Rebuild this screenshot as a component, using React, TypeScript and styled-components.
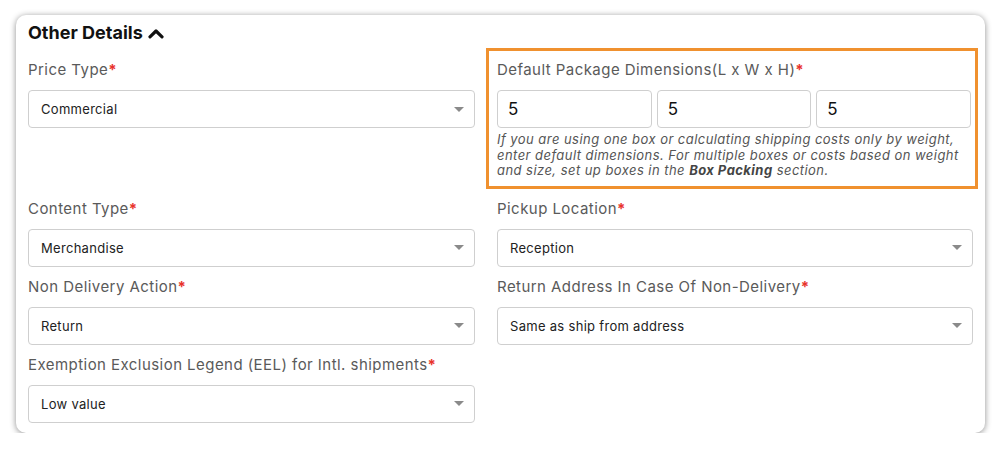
import { FC } from "react";
import styled, { createGlobalStyle } from "styled-components";

const GlobalStyle = createGlobalStyle`
    html, body {
        margin: 0;
        padding: 0;
        background: #ffffff;
    }

    body {
        font-family: Inter, "Noto Sans", sans-serif;
        color: #222222;
    }
`;

type SelectFieldProps = {
    label: string;
    value: string;
};

const SelectField: FC<SelectFieldProps> = ({ label, value }) => (
    <Field>
        <FieldLabel>
            {label}
            <Required>*</Required>
        </FieldLabel>
        <SelectBox>
            <SelectValue>{value}</SelectValue>
            <Caret />
        </SelectBox>
    </Field>
);

const App: FC = () => {
    return (
        <>
            <GlobalStyle />
            <Page>
                <Card>
                    <CardTitle>
                        Other Details
                        <svg width="16" height="11" viewBox="0 0 16 11" aria-hidden="true">
                            <polyline
                                points="2,8.8 8,3 14,8.8"
                                fill="none"
                                stroke="#111"
                                strokeWidth="3.2"
                                strokeLinecap="round"
                                strokeLinejoin="round"
                            />
                        </svg>
                    </CardTitle>
                    <FormGrid>
                        <SelectField label="Price Type" value="Commercial" />
                        <Highlight>
                            <FieldLabel>
                                Default Package Dimensions(L x W x H)
                                <Required>*</Required>
                            </FieldLabel>
                            <DimensionRow>
                                <DimensionInput defaultValue="5" />
                                <DimensionInput defaultValue="5" />
                                <DimensionInput defaultValue="5" />
                            </DimensionRow>
                            <HelpText>
                                If you are using one box or calculating shipping costs only by weight,
                                enter default dimensions. For multiple boxes or costs based on weight
                                and size, set up boxes in the <strong>Box Packing</strong> section.
                            </HelpText>
                        </Highlight>
                        <SelectField label="Content Type" value="Merchandise" />
                        <SelectField label="Pickup Location" value="Reception" />
                        <SelectField label="Non Delivery Action" value="Return" />
                        <SelectField
                            label="Return Address In Case Of Non-Delivery"
                            value="Same as ship from address"
                        />
                        <SelectField
                            label="Exemption Exclusion Legend (EEL) for Intl. shipments"
                            value="Low value"
                        />
                    </FormGrid>
                </Card>
            </Page>
        </>
    );
};

export default App;

const Page = styled.div`
    padding: 15px 15px 0 16px;
`;

const Card = styled.section`
    background: #ffffff;
    border-radius: 10px;
    box-shadow: 0 1px 6px rgba(0, 0, 0, 0.45);
    padding: 8px 12px 10px 12px;
`;

const CardTitle = styled.h2`
    display: flex;
    align-items: center;
    gap: 5px;
    margin: 0;
    font-size: 18px;
    font-weight: 700;
    line-height: 20px;
    color: #111111;
`;

const FormGrid = styled.div`
    display: grid;
    grid-template-columns: 447px 1fr;
    column-gap: 22px;
    row-gap: 10px;
    margin-top: 17px;
    align-items: start;
`;

const Field = styled.div`
    display: flex;
    flex-direction: column;
    gap: 10px;
`;

const FieldLabel = styled.label`
    font-size: 15px;
    line-height: 20px;
    color: #5a5a5a;
    letter-spacing: 0.45px;
`;

const Required = styled.span`
    color: #e8322b;
    font-weight: 700;
`;

const SelectBox = styled.div`
    display: flex;
    align-items: center;
    justify-content: space-between;
    height: 38px;
    box-sizing: border-box;
    padding: 0 10px 0 12px;
    border: 1px solid #cfcfcf;
    border-radius: 4px;
    background: #ffffff;
`;

const SelectValue = styled.span`
    font-size: 13px;
    color: #222222;
    letter-spacing: 0.3px;
`;

const Caret = styled.span`
    width: 0;
    height: 0;
    border-left: 5px solid transparent;
    border-right: 5px solid transparent;
    border-top: 5px solid #8a8a8a;
`;

const Highlight = styled.div`
    display: flex;
    flex-direction: column;
    margin: -12px -5px 0 -11px;
    padding: 9px 4px 7px 8px;
    border: 3px solid #f0912f;
`;

const DimensionRow = styled.div`
    display: grid;
    grid-template-columns: repeat(3, 1fr);
    gap: 5px;
    margin-top: 10px;
`;

const DimensionInput = styled.input`
    height: 38px;
    box-sizing: border-box;
    min-width: 0;
    padding: 0 10px;
    border: 1px solid #cfcfcf;
    border-radius: 4px;
    font-family: Inter, "Noto Sans", sans-serif;
    font-size: 17px;
    color: #111111;
    outline: none;
`;

const HelpText = styled.p`
    margin: 4px 0 0 0;
    font-size: 13px;
    line-height: 15.5px;
    font-style: italic;
    color: #555555;
    letter-spacing: 0.45px;

    strong {
        font-weight: 700;
        color: #444444;
    }
`;
